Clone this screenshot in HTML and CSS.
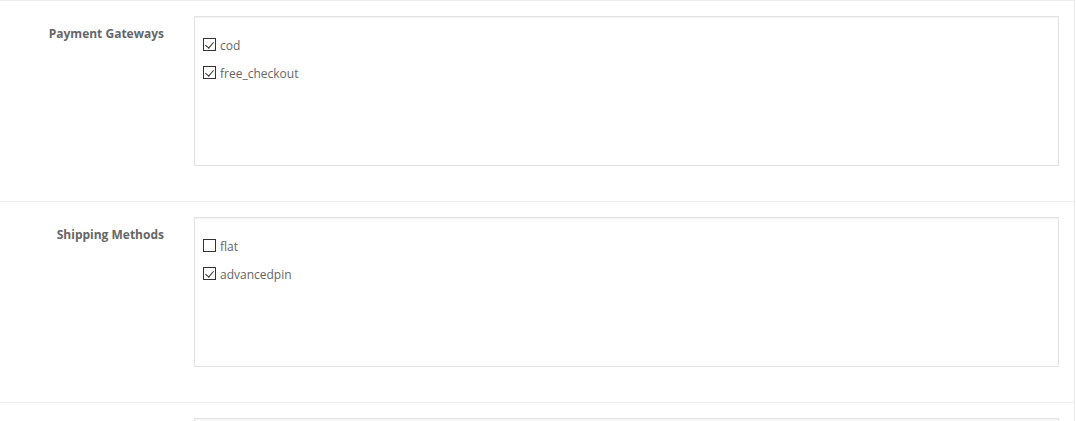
FILE: index.html
```html
<!DOCTYPE html>
<html lang="en">
<head>
    <meta charset="UTF-8">
    <meta name="viewport" content="width=device-width, initial-scale=1.0">
    <title>Checkout Settings</title>
    <link rel="stylesheet" href="styles.css">
</head>
<body>

    <div id="panel">

        <div class="form-group">
            <label class="control-label">Payment Gateways</label>
            <div class="field">
                <div class="well">
                    <div class="option">
                        <span class="check on"></span>
                        <span class="name">cod</span>
                    </div>
                    <div class="option">
                        <span class="check on"></span>
                        <span class="name">free_checkout</span>
                    </div>
                </div>
            </div>
        </div>

        <div class="form-group">
            <label class="control-label">Shipping Methods</label>
            <div class="field">
                <div class="well">
                    <div class="option">
                        <span class="check"></span>
                        <span class="name">flat</span>
                    </div>
                    <div class="option">
                        <span class="check on"></span>
                        <span class="name">advancedpin</span>
                    </div>
                </div>
            </div>
        </div>

        <div class="form-group">
            <label class="control-label"></label>
            <div class="field">
                <div class="well"></div>
            </div>
        </div>

    </div>

</body>
</html>
```

FILE: styles.css
```css
body {
    font-family: "Open Sans", Arial, sans-serif;
    font-size: 12px;
    line-height: 17px;
    color: #666;
    margin: 0;
    padding: 0;
    background-color: #fff;
}
#panel {
    width: 1075px;
    border-right: 1px solid #e8e8e8;
    box-sizing: border-box;
    height: 421px;
    overflow: hidden;
}
.form-group {
    display: flex;
    width: 1074px;
    border-top: 1px solid #ededed;
    padding: 15px 0;
    box-sizing: border-box;
}
.control-label {
    width: 179px;
    padding: 9px 15px 0 15px;
    box-sizing: border-box;
    text-align: right;
    font-weight: bold;
    color: #666;
    flex-shrink: 0;
}
.field {
    width: 895px;
    padding: 0 15px;
    box-sizing: border-box;
}
.well {
    height: 150px;
    border: 1px solid #e3e3e3;
    box-shadow: inset 0 1px 1px rgba(0, 0, 0, 0.05);
    padding: 17px 8px;
    box-sizing: border-box;
    margin-bottom: 20px;
    display: flex;
    flex-direction: column;
    gap: 8px;
}
.option {
    display: flex;
    align-items: center;
    height: 20px;
}
.name {
    padding-top: 2px;
}
.check {
    width: 13px;
    height: 13px;
    border: 1px solid #333;
    box-sizing: border-box;
    margin-right: 4px;
    position: relative;
    flex-shrink: 0;
}
.check.on::after {
    content: "";
    position: absolute;
    left: 3px;
    top: 1px;
    width: 4px;
    height: 7px;
    border-right: 1px solid #333;
    border-bottom: 1px solid #333;
    transform: rotate(40deg);
}
```
